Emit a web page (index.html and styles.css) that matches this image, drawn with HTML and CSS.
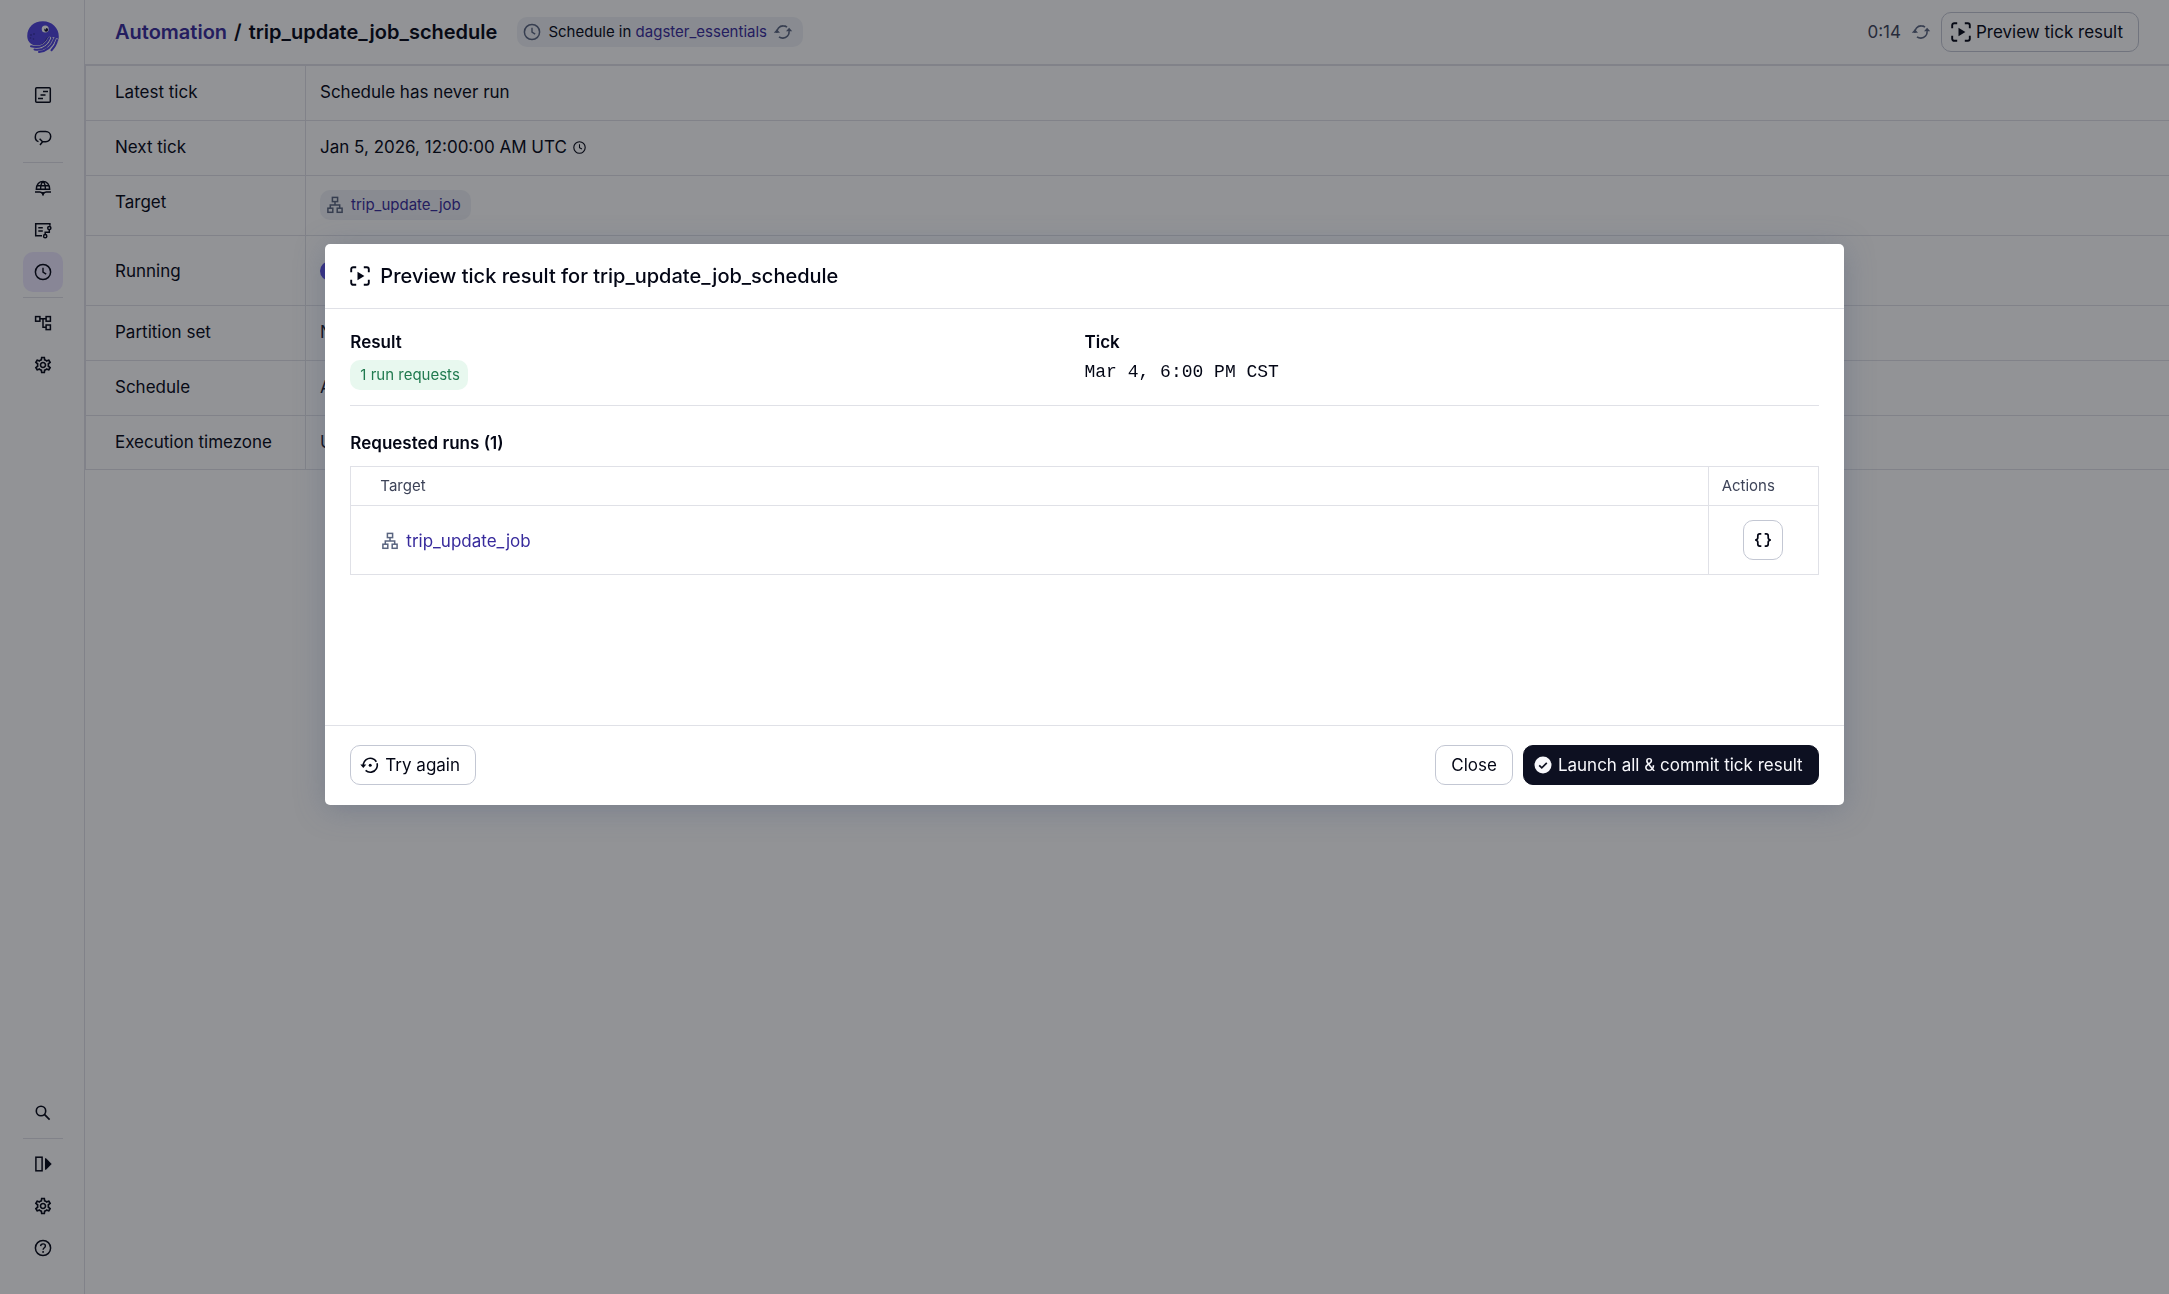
FILE: index.html
```html
<!DOCTYPE html>
<html lang="en">
<head>
<meta charset="utf-8">
<meta name="viewport" content="width=device-width, initial-scale=1">
<title>trip_update_job_schedule</title>
<link rel="stylesheet" href="styles.css">
</head>
<body>
<svg class="sprite" aria-hidden="true">
  <symbol id="i-clock" viewBox="0 0 20 20"><circle cx="10" cy="10" r="7.6" fill="none" stroke="currentColor" stroke-width="1.5"/><path d="M10 5.7v4.5l3.2 1.9" fill="none" stroke="currentColor" stroke-width="1.4"/></symbol>
  <symbol id="i-gear" viewBox="0 0 24 24"><path fill="currentColor" d="M19.43 12.98c.04-.32.07-.64.07-.98 0-.34-.03-.66-.07-.98l2.11-1.65c.19-.15.24-.42.12-.64l-2-3.46c-.09-.16-.26-.25-.44-.25-.06 0-.12.01-.17.03l-2.49 1c-.52-.4-1.08-.73-1.69-.98l-.38-2.65C14.46 2.18 14.25 2 14 2h-4c-.25 0-.46.18-.49.42l-.38 2.65c-.61.25-1.17.59-1.69.98l-2.49-1c-.06-.02-.12-.03-.18-.03-.17 0-.34.09-.43.25l-2 3.46c-.13.22-.07.49.12.64l2.11 1.65c-.04.32-.07.65-.07.98 0 .33.03.66.07.98l-2.11 1.65c-.19.15-.24.42-.12.64l2 3.46c.09.16.26.25.44.25.06 0 .12-.01.17-.03l2.49-1c.52.4 1.08.73 1.69.98l.38 2.65c.03.24.24.42.49.42h4c.25 0 .46-.18.49-.42l.38-2.65c.61-.25 1.17-.59 1.69-.98l2.49 1c.06.02.12.03.18.03.17 0 .34-.09.43-.25l2-3.46c.12-.22.07-.49-.12-.64l-2.11-1.65zm-1.98-1.71c.04.31.05.52.05.73 0 .21-.02.43-.05.73l-.14 1.13.89.7 1.08.84-.7 1.21-1.27-.51-1.04-.42-.9.68c-.43.32-.84.56-1.25.73l-1.06.43-.16 1.13-.2 1.35h-1.4l-.19-1.35-.16-1.13-1.06-.43c-.43-.18-.83-.41-1.23-.71l-.91-.7-1.06.43-1.27.51-.7-1.21 1.08-.84.89-.7-.14-1.13c-.03-.31-.05-.54-.05-.74s.02-.43.05-.73l.14-1.13-.89-.7-1.08-.84.7-1.21 1.27.51 1.04.42.9-.68c.43-.32.84-.56 1.25-.73l1.06-.43.16-1.13.2-1.35h1.39l.19 1.35.16 1.13 1.06.43c.43.18.83.41 1.23.71l.91.7 1.06-.43 1.27-.51.7 1.21-1.07.85-.89.7.14 1.13zM12 8c-2.21 0-4 1.79-4 4s1.79 4 4 4 4-1.79 4-4-1.79-4-4-4zm0 6c-1.1 0-2-.9-2-2s.9-2 2-2 2 .9 2 2-.9 2-2 2z"/></symbol>
  <symbol id="i-job" viewBox="0 0 20 20"><g fill="none" stroke="currentColor" stroke-width="1.5"><rect x="7.4" y="2.4" width="5.2" height="4.2"/><rect x="2.9" y="13.2" width="4.9" height="4.1"/><rect x="12.2" y="13.2" width="4.9" height="4.1"/><path d="M10 6.6v3.2M5.3 13.2V9.9h9.4v3.3"/></g></symbol>
  <symbol id="i-sync" viewBox="0 0 20 20"><g fill="none" stroke="currentColor" stroke-width="1.6"><path d="M3.9 10.8A6.2 6.2 0 0 1 10.2 3.9c1.5 0 2.7.4 3.8 1.3"/><path d="M16.1 9.2a6.2 6.2 0 0 1-6.3 6.9c-1.5 0-2.7-.4-3.8-1.3"/></g><path fill="currentColor" d="M.8 10.8h6.2l-3.1-3.6zM19.2 9.2H13l3.1-3.4z"/></symbol>
  <symbol id="i-preview" viewBox="0 0 20 20"><path d="M1.2 6.200V3.200a2 2 0 0 1 2-2h3M13.800 1.200h3a2 2 0 0 1 2 2v3M18.800 13.800v3a2 2 0 0 1-2 2h-3M6.200 18.800h-3a2 2 0 0 1-2-2v-3" fill="none" stroke="currentColor" stroke-width="1.9"/><path fill="currentColor" d="M7.500 5.700v8.600l6.900-4.300z"/></symbol>
</svg>

<div class="app">
  <nav class="sidebar" aria-label="Main">
    <a class="logo" href="#" aria-label="Home">
      <svg viewBox="0 0 32 32" width="32" height="32">
        <path fill="#4f43dd" d="M.3 16C-.4 7 6.500.3 15.800.3 25 .3 31.800 7 31.800 15.500c0 3-.8 5.500-2 7.500L20 22l-9 2.500C5 24.800.8 21.500.3 16z"/>
        <path fill="#352da5" d="M5 23.800c6 1.800 11.500-.3 13.500-5.300.8-2 2.500-3 4.500-2.600l3 1.500-3 8-9 2z"/>
        <path fill="#4f43dd" d="M1 18.500c2 3.800 6.500 5 10.500 3.300 3.500-1.500 4.500-3.600 6-5.300L8 11z"/>
        <g fill="none" stroke="#fff" stroke-width="3.600" stroke-linecap="round"><path d="M4 25.500c8 2 15-.5 18.500-8M12 30c8-.8 12-5 14.300-12M25 28c2.600-2.600 4.200-5.500 4.800-9"/></g>
        <g fill="none" stroke="#4f43dd" stroke-width="2" stroke-linecap="round"><path d="M4 25.300c8 2 15-.5 18.200-8.300M7.500 28.500c8.500 1.200 14.500-3 17.700-11M12 30.900c8-.6 13-5.500 15.700-13M24.500 29.200c3-3.200 4.800-6.200 5.600-10.200"/></g>
        <circle cx="18.200" cy="8" r="3.500" fill="#fff"/><circle cx="19.200" cy="8.800" r="1.900" fill="#0b0b30"/><circle cx="18.500" cy="7.800" r=".7" fill="#fff"/>
        <g fill="#352da5"><circle cx="4" cy="14" r=".9"/><circle cx="7" cy="13" r=".9"/><circle cx="3.500" cy="17" r=".8"/><circle cx="6.500" cy="18" r=".8"/></g>
      </svg>
    </a>
    <a class="nav-item" href="#" aria-label="Overview"><svg class="icon" viewBox="0 0 20 20"><rect x="2.700" y="2.700" width="14.600" height="14.600" rx="1" fill="none" stroke="currentColor" stroke-width="1.500"/><path d="M10 6.400h5M7.500 10h5M5 13.600h5" stroke="currentColor" stroke-width="1.500"/></svg></a>
    <a class="nav-item" href="#" aria-label="Runs"><svg class="icon" viewBox="0 0 20 20"><path d="M5.500 14.600C3.500 13.900 2.300 12.200 2.300 9.900c0-3 2.200-5.300 5-5.300h5.400c2.800 0 5 2.200 5 5s-2.200 5.200-5 5.200H8.500M6.600 11.800l3 3-2.600 3.200" fill="none" stroke="currentColor" stroke-width="1.500"/></svg></a>
    <hr class="nav-rule">
    <a class="nav-item" href="#" aria-label="Catalog"><svg class="icon" viewBox="0 0 20 20"><g fill="none" stroke="currentColor" stroke-width="1.400"><path d="M3.300 11.300C3.300 6.300 6.300 3.400 10 3.400s6.700 2.900 6.700 7.900zM4 7.800h12M7.600 11.300c0-4 .8-6.500 2.400-7.900 1.600 1.400 2.400 3.900 2.400 7.900"/><path d="M2 14h4.800c1.600 0 2.600.8 3.200 2.200.6-1.400 1.600-2.200 3.200-2.200H18"/></g><path fill="currentColor" d="M8 14h4l-2 4.300z"/></svg></a>
    <a class="nav-item" href="#" aria-label="Jobs"><svg class="icon" viewBox="0 0 20 20"><g fill="none" stroke="currentColor" stroke-width="1.500"><path d="M9 15.700H2.700V3.700h14.200v2"/><path d="M5.300 7.700h4.500M5.300 11h4.500"/><circle cx="16.300" cy="8" r="1.600"/><circle cx="12.200" cy="16.200" r="1.600"/><path d="M16.300 9.600v2.600h-4.100v2.400"/></g></svg></a>
    <a class="nav-item active" href="#" aria-label="Automation" aria-current="page"><svg class="icon"><use href="#i-clock"/></svg></a>
    <hr class="nav-rule">
    <a class="nav-item" href="#" aria-label="Lineage"><svg class="icon" viewBox="0 0 20 20"><g fill="none" stroke="currentColor" stroke-width="1.500"><rect x="2.600" y="3.600" width="4.300" height="4.600"/><rect x="13.100" y="3.600" width="4.300" height="4.600"/><rect x="13.100" y="12" width="4.300" height="4.600"/><path d="M6.900 5.800h6.200M10 5.800v8.500h3.100"/></g></svg></a>
    <a class="nav-item" href="#" aria-label="Deployment"><svg class="icon"><use href="#i-gear"/></svg></a>
    <div class="spacer"></div>
    <button class="nav-item" aria-label="Search"><svg class="icon" viewBox="0 0 20 20"><circle cx="8" cy="8" r="4.700" fill="none" stroke="currentColor" stroke-width="1.600"/><path d="M11.400 11.400l5.200 5.300" stroke="currentColor" stroke-width="1.700"/></svg></button>
    <hr class="nav-rule">
    <button class="nav-item" aria-label="Expand sidebar"><svg class="icon" viewBox="0 0 20 20"><rect x="2.900" y="3.200" width="6.200" height="13.600" fill="none" stroke="currentColor" stroke-width="1.500"/><path fill="currentColor" d="M12 4.200h1l5.700 5.800-5.700 5.800h-1z"/></svg></button>
    <button class="nav-item" aria-label="Settings"><svg class="icon"><use href="#i-gear"/></svg></button>
    <button class="nav-item" aria-label="Help"><svg class="icon" viewBox="0 0 20 20"><circle cx="10" cy="10" r="7.600" fill="none" stroke="currentColor" stroke-width="1.500"/><path d="M7.600 8.100c.1-1.400 1.100-2.200 2.500-2.200 1.300 0 2.300.8 2.300 2 0 1.700-2.300 1.900-2.300 3.900" fill="none" stroke="currentColor" stroke-width="1.400"/><circle cx="10.100" cy="13.900" r=".95" fill="currentColor"/></svg></button>
  </nav>

  <main class="content">
    <header class="page-header">
      <h1 class="page-title"><a href="#">Automation</a><span>/</span><span>trip_update_job_schedule</span></h1>
      <span class="tag"><svg class="icon"><use href="#i-clock"/></svg><span>Schedule in <a href="#">dagster_essentials</a></span><svg class="icon"><use href="#i-sync"/></svg></span>
      <div class="spacer"></div>
      <span class="countdown">0:14</span>
      <svg class="icon refresh"><use href="#i-sync"/></svg>
      <button class="btn"><svg class="icon"><use href="#i-preview"/></svg>Preview tick result</button>
    </header>
    <table class="details">
      <tbody>
        <tr><th scope="row">Latest tick</th><td>Schedule has never run</td></tr>
        <tr><th scope="row">Next tick</th><td><span class="with-icon">Jan 5, 2026, 12:00:00 AM UTC <svg class="icon-sm"><use href="#i-clock"/></svg></span></td></tr>
        <tr class="row-tag"><th scope="row">Target</th><td><span class="tag"><svg class="icon"><use href="#i-job"/></svg><a href="#">trip_update_job</a></span></td></tr>
        <tr class="row-switch"><th scope="row"><label for="running">Running</label></th><td><input class="switch" type="checkbox" id="running" checked></td></tr>
        <tr><th scope="row">Partition set</th><td>None</td></tr>
        <tr><th scope="row">Schedule</th><td>At 12:00 AM</td></tr>
        <tr><th scope="row">Execution timezone</th><td>UTC</td></tr>
      </tbody>
    </table>
  </main>
</div>

<div class="backdrop">
  <section class="dialog" role="dialog" aria-modal="true" aria-labelledby="dialog-title">
    <header class="dialog-header">
      <svg class="icon"><use href="#i-preview"/></svg>
      <h2 id="dialog-title">Preview tick result for trip_update_job_schedule</h2>
    </header>
    <div class="dialog-body">
      <div class="summary">
        <div><h3>Result</h3><span class="tag success">1 run requests</span></div>
        <div><h3>Tick</h3><time class="mono">Mar 4, 6:00 PM CST</time></div>
      </div>
      <h3 class="runs-title">Requested runs (1)</h3>
      <table class="runs">
        <thead><tr><th scope="col">Target</th><th scope="col" class="actions">Actions</th></tr></thead>
        <tbody><tr>
          <td><a class="job" href="#"><svg class="icon"><use href="#i-job"/></svg>trip_update_job</a></td>
          <td class="actions"><button class="btn square" aria-label="View run config"><svg class="icon" viewBox="0 0 20 20"><path d="M8.300 3.900H6.700c-1.300 0-1.900.7-1.900 2v1.900c0 1.200-.8 2-2.600 2.200 1.800.2 2.600 1 2.600 2.200v1.900c0 1.300.6 2 1.900 2h1.600M11.700 3.900h1.600c1.300 0 1.900.7 1.900 2v1.900c0 1.200.8 2 2.600 2.200-1.800.2-2.600 1-2.600 2.200v1.900c0 1.300-.6 2-1.900 2h-1.600" fill="none" stroke="currentColor" stroke-width="1.700"/></svg></button></td>
        </tr></tbody>
      </table>
    </div>
    <footer class="dialog-footer">
      <button class="btn"><svg class="icon" viewBox="0 0 20 20"><path d="M3.300 10a7 7 0 1 1 2.300 5.400" fill="none" stroke="currentColor" stroke-width="1.600" stroke-dasharray="18 1.600 30"/><path fill="currentColor" d="M.3 9.600h6l-3 3.500z"/><circle cx="10.200" cy="10.200" r="1.500" fill="currentColor"/></svg>Try again</button>
      <div class="spacer"></div>
      <button class="btn">Close</button>
      <button class="btn primary"><svg class="icon" viewBox="0 0 20 20"><circle cx="10" cy="10" r="8.500" fill="#f8f8fc"/><path d="M6.200 10.300l2.600 2.600 5-5" fill="none" stroke="#0d1021" stroke-width="1.700"/></svg>Launch all &amp; commit tick result</button>
    </footer>
  </section>
</div>
</body>
</html>
```

FILE: styles.css
```css
* { box-sizing: border-box; }

:root {
  --text: #030615;
  --text-soft: #3d4358;
  --link: #372a9c;
  --line: #e0e1e7;
  --border: #c3c7d3;
  --accent: #4f43dd;
}

body {
  margin: 0;
  font-family: Inter, "Liberation Sans", sans-serif;
  font-size: 17px;
  line-height: 24px;
  color: var(--text);
  background: #fff;
}

h1, h2, h3 { margin: 0; font-weight: 600; }
a { color: var(--link); text-decoration: none; }
.sprite { position: absolute; width: 0; height: 0; }
.icon { width: 20px; height: 20px; flex: none; display: block; }
.icon-sm { width: 15px; height: 15px; flex: none; }
.spacer { flex: 1; }

.app { display: flex; min-height: 100vh; }

/* Sidebar */
.sidebar {
  flex: none;
  width: 85px;
  display: flex;
  flex-direction: column;
  align-items: center;
  gap: 2px;
  padding: 21px 0 26px 2px;
  border-right: 1px solid var(--line);
}
.logo { display: block; height: 52px; }
.nav-item {
  display: flex;
  align-items: center;
  justify-content: center;
  width: 40px;
  height: 40px;
  padding: 0;
  border: 0;
  border-radius: 10px;
  background: none;
  color: var(--text);
}
.nav-item.active { background: #ede8ff; }
.nav-rule {
  width: 40px;
  margin: 3px 0;
  border: 0;
  border-top: 1px solid var(--line);
}

/* Page */
.content { flex: 1; min-width: 0; }
.page-header {
  display: flex;
  align-items: center;
  height: 65px;
  padding: 0 30px;
  border-bottom: 1px solid var(--line);
}
.page-title {
  display: flex;
  gap: 7px;
  margin-right: 20px;
  font-size: 20px;
  line-height: 26px;
}
.countdown { color: var(--text-soft); }
.refresh { margin: 0 10px; }
.page-header .icon { color: #5a6580; }
.page-header .btn .icon { color: inherit; }

.tag {
  display: inline-flex;
  align-items: center;
  gap: 6px;
  height: 30px;
  padding: 0 10px 0 5px;
  border-radius: 10px;
  background: #eef1f6;
  font-size: 15px;
  line-height: 20px;
}
.tag .icon { color: #5a6580; }
.tag.success { padding: 0 8px 0 10px; background: #e8f8ef; color: #207a4f; }

.btn {
  display: inline-flex;
  align-items: center;
  gap: 5px;
  height: 40px;
  padding: 0 15px 0 9px;
  border: 1px solid var(--border);
  border-radius: 10px;
  background: #fff;
  color: var(--text);
  font: inherit;
  white-space: nowrap;
}
.btn:not(:has(.icon)) { padding: 0 15px; }
.btn.primary { background: #0d1021; border-color: #0d1021; color: #f8f8fc; }
.btn.square { width: 40px; padding: 0; justify-content: center; }

.details { width: 100%; border-collapse: collapse; }
.details th, .details td {
  height: 55px;
  padding: 14px;
  border: 1px solid var(--line);
  border-right: 0;
  text-align: left;
  vertical-align: top;
  font-weight: 400;
}
.details th { width: 220px; padding-left: 29px; }
.details .row-tag > * { height: 60px; }
.details .row-switch > * { height: 70px; vertical-align: middle; }
.details tr:last-child > * { height: 54px; }
.details .tag { vertical-align: top; }
.with-icon { display: inline-flex; align-items: center; gap: 5px; }
.switch {
  appearance: none;
  display: block;
  width: 36px;
  height: 20px;
  margin: 0;
  border-radius: 10px;
  background: var(--accent);
}

/* Dialog */
.backdrop {
  position: fixed;
  inset: 0;
  padding-top: 244px;
  background: rgba(13, 15, 23, 0.45);
}
.dialog {
  width: 70%;
  margin: 0 auto;
  border-radius: 5px;
  background: #fff;
  box-shadow: 0 4px 30px rgba(80, 95, 125, 0.4);
}
.dialog-header {
  display: flex;
  align-items: center;
  gap: 10px;
  height: 65px;
  padding: 0 25px;
  border-bottom: 1px solid var(--line);
}
.dialog-header h2 { font-size: 20px; line-height: 26px; font-weight: 500; }
.dialog-body { min-height: 416px; padding: 21px 25px 0; }
.dialog-body h3 { font-size: 17px; line-height: 24px; }
.summary {
  display: grid;
  grid-template-columns: 1fr 1fr;
  padding-bottom: 15px;
  border-bottom: 1px solid var(--line);
}
.summary > div { display: flex; flex-direction: column; align-items: flex-start; gap: 6px; }
.mono { font-family: "Liberation Mono", monospace; font-size: 18px; }
.runs-title { padding: 25px 0 11px; }

.runs { width: 100%; border-collapse: collapse; }
.runs th, .runs td { border: 1px solid var(--line); text-align: left; padding: 0 29px; }
.runs th { height: 39px; font-size: 15px; line-height: 20px; font-weight: 400; color: var(--text-soft); }
.runs td { height: 69px; }
.runs .actions { width: 110px; }
.runs th.actions { padding: 0 13px; }
.runs td.actions { padding: 0; text-align: center; }
.runs .btn { vertical-align: middle; }
.job { display: inline-flex; align-items: center; gap: 6px; vertical-align: middle; }
.job .icon { color: #5a6580; }

.dialog-footer {
  display: flex;
  align-items: center;
  gap: 10px;
  padding: 19px 25px 20px;
  border-top: 1px solid var(--line);
}
```
